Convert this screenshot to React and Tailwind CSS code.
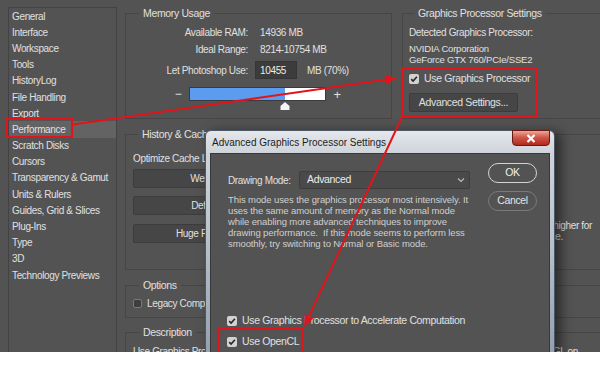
import React from 'react';

function Check() {
  return (
    <span className="flex items-center justify-center w-[10px] h-[10px] rounded-[2px] bg-[#d2d2d2] shrink-0">
      <svg width="8" height="8" viewBox="0 0 8 8">
        <path d="M1.2 4.1 L3.1 6 L6.9 1.7" fill="none" stroke="#262626" strokeWidth="1.6" />
      </svg>
    </span>
  );
}

const items = [
  'General', 'Interface', 'Workspace', 'Tools', 'HistoryLog', 'File Handling', 'Export',
  'Performance', 'Scratch Disks', 'Cursors', 'Transparency & Gamut', 'Units & Rulers',
  'Guides, Grid & Slices', 'Plug-Ins', 'Type', '3D', 'Technology Previews',
];

function Legend({ children, left }) {
  return (
    <span className={`absolute top-[-8px] ${left} px-[4px] bg-[#535353] leading-[14px] text-[10.5px]`}>{children}</span>
  );
}

export default function App() {
  return (
    <div className="w-[600px] h-[366px] bg-white overflow-hidden font-['Liberation_Sans',sans-serif]">
      <div className="relative h-[352px] bg-[#535353] overflow-hidden flex items-start pl-[8px] pt-[7px] text-[10px] tracking-[-0.35px] text-[#e0e0e0]">
        {/* Sidebar */}
        <div className="w-[109px] h-[360px] border border-[#434343] shrink-0">
          {items.map((it) => (
            <div
              key={it}
              className={`h-[16.2px] flex items-center pl-[3px] whitespace-nowrap ${it === 'Performance' ? 'bg-[#636363]' : ''}`}
            >
              {it}
            </div>
          ))}
        </div>

        {/* Main */}
        <div className="ml-[8px] w-[490px] shrink-0 pt-[6px] flex flex-col">
          <div className="flex gap-[10px] h-[106px] shrink-0">
            {/* Memory Usage */}
            <div className="relative w-[267px] border border-[#464646] pt-[10px]">
              <Legend left="left-[13px]">Memory Usage</Legend>
              <div className="flex items-center h-[16px]">
                <span className="w-[122px] text-right">Available RAM:</span>
                <span className="ml-[12px]">14936 MB</span>
              </div>
              <div className="flex items-center h-[16px] mt-[1px]">
                <span className="w-[122px] text-right">Ideal Range:</span>
                <span className="ml-[12px]">8214-10754 MB</span>
              </div>
              <div className="flex items-center h-[18px] mt-[4px]">
                <span className="w-[122px] text-right">Let Photoshop Use:</span>
                <div className="ml-[7px] w-[42px] h-[18px] bg-[#3c3c3c] border border-[#363636] pl-[4px] flex items-center text-[#ececec]">10455</div>
                <span className="ml-[10px]">MB (70%)</span>
              </div>
              <div className="flex items-center h-[14px] mt-[8px] ml-[47px]">
                <span className="w-[10px] text-center text-[12px] leading-none">−</span>
                <div className="relative ml-[6px] w-[137px] h-[14px] bg-white border border-[#3a3a3a] flex">
                  <div className="w-[70%] h-full bg-[#5c9cf0]"></div>
                  <svg className="absolute top-full left-[70%] -translate-x-1/2 mt-[2px]" width="10" height="8" viewBox="0 0 10 8">
                    <polygon points="5,0 9.5,4 9.5,8 0.5,8 0.5,4" fill="#f4f4f4" />
                  </svg>
                </div>
                <span className="ml-[6px] w-[10px] text-center text-[13px] leading-none">+</span>
              </div>
            </div>

            {/* Graphics Processor Settings */}
            <div className="relative flex-1 border border-[#464646] pt-[10px] pl-[6px]">
              <Legend left="left-[11px]">Graphics Processor Settings</Legend>
              <div className="h-[16px] flex items-center">Detected Graphics Processor:</div>
              <div className="mt-[3px] text-[9.5px] leading-[11px] tracking-[-0.2px]">
                <div>NVIDIA Corporation</div>
                <div>GeForce GTX 760/PCIe/SSE2</div>
              </div>
              <div className="mt-[7px] h-[14px] flex items-center pl-[0px]">
                <Check />
                <span className="ml-[5px] text-[10.5px]">Use Graphics Processor</span>
              </div>
              <div className="mt-[7px] w-[109px] h-[19px] bg-[#464646] border border-[#3c3c3c] rounded-[2px] flex items-center justify-center text-[10.5px]">
                Advanced Settings...
              </div>
            </div>
          </div>

          {/* History & Cache */}
          <div className="relative mt-[15px] h-[136px] shrink-0 border border-[#464646] flex">
            <Legend left="left-[12px]">History &amp; Cache</Legend>
            <div className="pl-[7px] pt-[15px] w-[200px]">
              <div className="h-[16px] flex items-center">Optimize Cache Levels for:</div>
              <div className="mt-[3px] w-[182px] h-[19px] bg-[#464646] border border-[#3c3c3c] rounded-[2px] flex items-center justify-center">Web / UI Design</div>
              <div className="mt-[8px] w-[182px] h-[19px] bg-[#464646] border border-[#3c3c3c] rounded-[2px] flex items-center justify-center">Default / Photos</div>
              <div className="mt-[9px] w-[182px] h-[19px] bg-[#464646] border border-[#3c3c3c] rounded-[2px] flex items-center justify-center">Huge Pixel Dimensions</div>
            </div>
            <div className="flex-1 flex flex-col items-end pt-[85px] leading-[11px]">
              <div className="mr-[22px] whitespace-nowrap">Set Cache Levels to 2 or higher for</div>
              <div className="mr-[51px] whitespace-nowrap">best performance.</div>
            </div>
          </div>

          {/* Options */}
          <div className="relative mt-[15px] h-[33px] shrink-0 border border-[#464646] pl-[7px] pt-[12px]">
            <Legend left="left-[13px]">Options</Legend>
            <div className="flex items-center h-[10px]">
              <span className="w-[9px] h-[9px] rounded-[2px] bg-[#3e3e3e] border border-[#7a7a7a]"></span>
              <span className="ml-[5px]">Legacy Compositing</span>
            </div>
          </div>

          {/* Description */}
          <div className="relative mt-[14px] h-[40px] shrink-0 border border-[#464646] pl-[7px] pt-[11px]">
            <Legend left="left-[13px]">Description</Legend>
            <div className="flex">
              <span className="whitespace-nowrap">Use Graphics Processor to enable</span>
              <span className="ml-auto mr-[36px] whitespace-nowrap">features and OpenGL on</span>
            </div>
          </div>
        </div>

        {/* Dialog */}
        <div className="absolute left-[205px] top-[130px] w-[350px] h-[240px] rounded-t-[6px] border border-[#4d5866] bg-[linear-gradient(180deg,#e4e7eb_0%,#cdd3da_10%,#b9c2cc_45%,#8e9bab_100%)] shadow-[6px_2px_12px_rgba(0,0,0,0.5)] px-[4px] flex flex-col">
          <div className="h-[22px] shrink-0 flex items-center pl-[2px] text-[10px] tracking-normal text-[#1c1c1c]">
            Advanced Graphics Processor Settings
          </div>
          <div className="absolute top-[-1px] left-[306px] w-[38px] h-[16px] rounded-b-[4px] border border-[#6a1a12] bg-[linear-gradient(180deg,#eaa99a_0%,#d0574a_45%,#b02a1c_100%)] flex items-center justify-center">
            <svg width="10" height="9" viewBox="0 0 10 9">
              <path d="M1.5 1 L8.5 8 M8.5 1 L1.5 8" stroke="white" strokeWidth="2.2" />
            </svg>
          </div>
          <div className="flex-1 bg-[#535353] border border-[#383838] flex pl-[17px]">
            <div className="w-[264px] pt-[17px]">
              <div className="flex items-center h-[18px]">
                <span className="w-[71px]">Drawing Mode:</span>
                <div className="w-[171px] h-[18px] bg-[#4a4a4a] border border-[#3e3e3e] rounded-[2px] flex items-center pl-[7px] text-[10.5px] text-[#ececec]">
                  <span>Advanced</span>
                  <svg className="ml-auto mr-[4px]" width="8" height="6" viewBox="0 0 8 6">
                    <path d="M1 1.5 L4 4.5 L7 1.5" fill="none" stroke="#bdbdbd" strokeWidth="1.1" />
                  </svg>
                </div>
              </div>
              <div className="mt-[5px] text-[9.5px] leading-[11px] tracking-[-0.1px] text-[#cfcfcf] whitespace-nowrap">
                <div>This mode uses the graphics processor most intensively. It</div>
                <div>uses the same amount of memory as the Normal mode</div>
                <div>while enabling more advanced techniques to improve</div>
                <div>drawing performance.&nbsp; If this mode seems to perform less</div>
                <div>smoothly, try switching to Normal or Basic mode.</div>
              </div>
              <div className="mt-[65px] h-[14px] flex items-center -ml-[1px]">
                <Check />
                <span className="ml-[5px] text-[10.5px]">Use Graphics Processor to Accelerate Computation</span>
              </div>
              <div className="mt-[7px] h-[14px] flex items-center -ml-[1px]">
                <Check />
                <span className="ml-[5px] text-[10.5px]">Use OpenCL</span>
              </div>
            </div>
            <div className="pt-[9px] ml-[-4px] flex flex-col gap-[8px]">
              <div className="w-[49px] h-[20px] rounded-full border-[1.5px] border-[#d4d4d4] flex items-center justify-center text-[10.5px] text-[#f0f0f0]">OK</div>
              <div className="w-[49px] h-[20px] rounded-full border border-[#7a7a7a] flex items-center justify-center text-[10.5px] text-[#e4e4e4]">Cancel</div>
            </div>
          </div>
        </div>

        {/* Annotations */}
        <svg className="absolute left-0 top-0 pointer-events-none" width="600" height="352" viewBox="0 0 600 352">
          <g fill="none" stroke="#e1141c" strokeWidth="2">
            <rect x="6" y="119" width="66" height="18" />
            <rect x="402" y="68" width="134" height="48" />
            <rect x="218" y="329" width="84" height="30" />
            <line x1="73" y1="124.5" x2="385" y2="79.7" />
            <line x1="402" y1="117" x2="309" y2="316" />
          </g>
          <g fill="#e1141c">
            <polygon points="397,78 385.8,84.4 384.5,75.1" />
            <polygon points="304,327 313.6,318.2 304.8,314" />
          </g>
        </svg>
      </div>
    </div>
  );
}
